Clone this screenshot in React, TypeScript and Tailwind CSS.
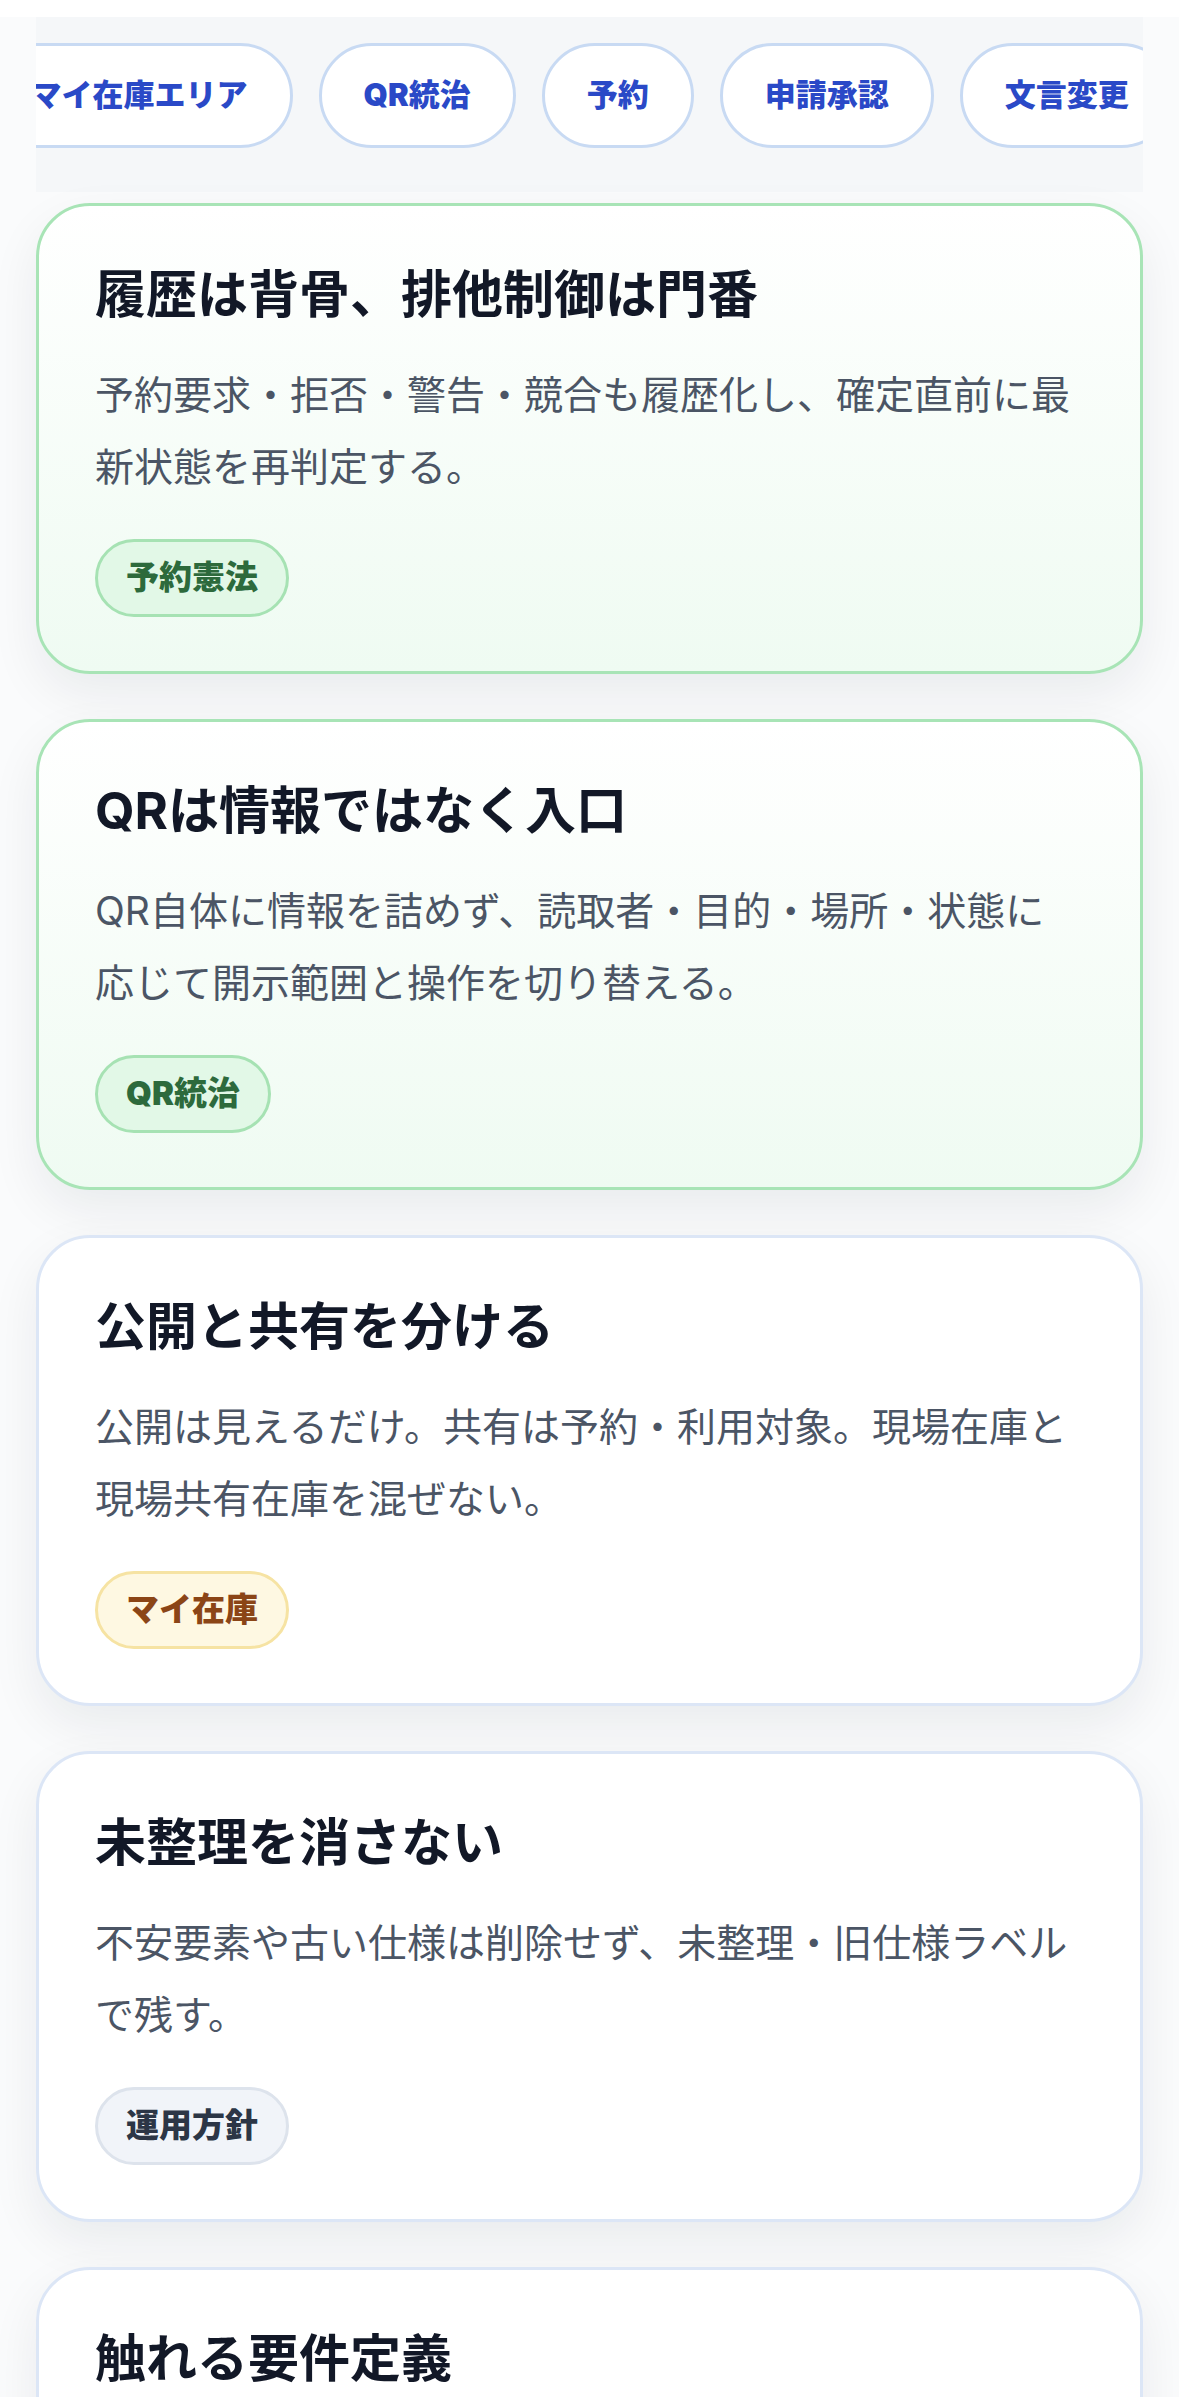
const chips = ["すべて", "マイ在庫エリア", "QR統治", "予約", "申請承認", "文言変更", "運用方針"];

type Tone = "green" | "amber" | "slate";

type Principle = {
  title: string;
  body: string;
  tag: string;
  tone: Tone;
};

const principles: Principle[] = [
  {
    title: "履歴は背骨、排他制御は門番",
    body: "予約要求・拒否・警告・競合も履歴化し、確定直前に最新状態を再判定する。",
    tag: "予約憲法",
    tone: "green",
  },
  {
    title: "QRは情報ではなく入口",
    body: "QR自体に情報を詰めず、読取者・目的・場所・状態に応じて開示範囲と操作を切り替える。",
    tag: "QR統治",
    tone: "green",
  },
  {
    title: "公開と共有を分ける",
    body: "公開は見えるだけ。共有は予約・利用対象。現場在庫と現場共有在庫を混ぜない。",
    tag: "マイ在庫",
    tone: "amber",
  },
  {
    title: "未整理を消さない",
    body: "不安要素や古い仕様は削除せず、未整理・旧仕様ラベルで残す。",
    tag: "運用方針",
    tone: "slate",
  },
  {
    title: "触れる要件定義",
    body: "画面を触りながら要件を確かめ、決めたことはその場で履歴に残す。",
    tag: "要件定義",
    tone: "slate",
  },
];

const cardTone: Record<Tone, string> = {
  green: "border-[#a8e4b6] bg-gradient-to-b from-white to-[#effbf2]",
  amber: "border-[#dce6f6] bg-white",
  slate: "border-[#dce6f6] bg-white",
};

const tagTone: Record<Tone, string> = {
  green: "border-[#a6e2b3] bg-[#e2f8e7] text-[#2d6a3c]",
  amber: "border-[#f6e3a3] bg-[#fef8e2] text-[#8b4516]",
  slate: "border-[#dde3ec] bg-[#f1f4f9] text-[#2c3646]",
};

function PrincipleCard({ item }: { item: Principle }) {
  return (
    <article
      className={`rounded-[54px] border-[3px] pt-[57px] pb-[54px] pl-[56px] pr-[64px] shadow-[0_20px_50px_rgba(15,23,42,0.07)] ${cardTone[item.tone]}`}
    >
      <h2 className="text-[51px] font-bold leading-[64px] text-[#121827]">{item.title}</h2>
      <p className="mt-[32px] text-[39px] leading-[72px] text-[#4b5565]">{item.body}</p>
      <div className="mt-[36px] flex">
        <span
          className={`flex h-[78px] items-center rounded-full border-[3px] px-[28px] text-[33px] font-black ${tagTone[item.tone]}`}
        >
          {item.tag}
        </span>
      </div>
    </article>
  );
}

export default function App() {
  return (
    <div
      className="min-h-screen bg-[#fafbfc]"
      style={{ fontFamily: 'Inter, "Noto Sans CJK JP", sans-serif' }}
    >
      <div className="h-[17px] bg-white" />
      <div className="mx-[36px]">
        <nav className="overflow-hidden bg-[#f5f7f9] pt-[26px] pb-[44px]">
          <div className="-ml-[256px] flex gap-[26px]">
            {chips.map((chip) => (
              <span
                key={chip}
                className="flex h-[105px] shrink-0 items-center whitespace-nowrap rounded-full border-[3px] border-[#c8daf3] bg-white px-[42px] text-[31px] font-black text-[#2a49c7]"
              >
                {chip}
              </span>
            ))}
          </div>
        </nav>
        <main className="mt-[11px] flex flex-col gap-[45px] pb-[60px]">
          {principles.map((item) => (
            <PrincipleCard key={item.title} item={item} />
          ))}
        </main>
      </div>
    </div>
  );
}
